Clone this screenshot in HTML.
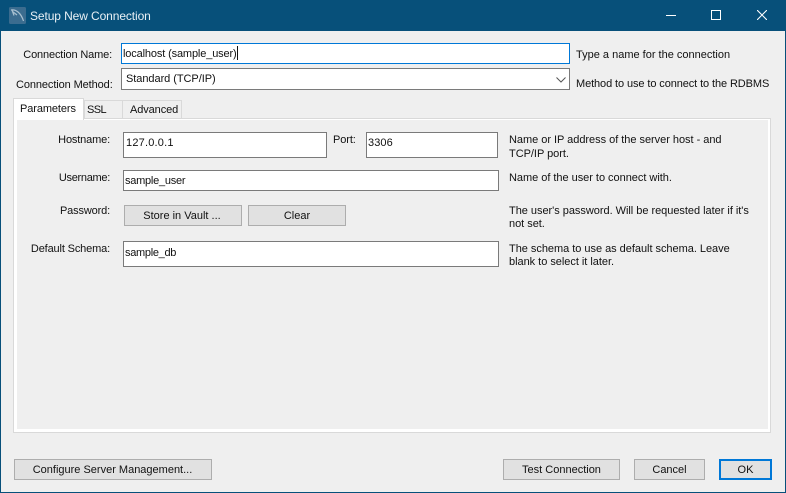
<!DOCTYPE html>
<html><head><meta charset="utf-8">
<style>
html,body{margin:0;padding:0;width:786px;height:493px;overflow:hidden;background:#efefef}
body{font-family:"Liberation Sans",sans-serif;font-size:11px;letter-spacing:-.1px;color:#111;position:relative}
div{position:absolute;box-sizing:border-box}
.t{white-space:nowrap;line-height:14px;height:14px}
.r{text-align:right;letter-spacing:-.15px}
.h{letter-spacing:-.03px}
.i{background:#fff;border:1px solid #7a7a7a}
.b{background:#e1e1e1;border:1px solid #adadad;text-align:center;white-space:nowrap;line-height:21px;letter-spacing:0}
</style></head><body>
<div style="left:0;top:0;width:786px;height:31px;background:#07507a"></div>
<div style="left:0;top:31px;width:1px;height:462px;background:#07507a"></div>
<div style="left:785px;top:31px;width:1px;height:462px;background:#07507a"></div>
<div style="left:0;top:492px;width:786px;height:1px;background:#07507a"></div>
<svg style="position:absolute;left:9px;top:7px" width="17" height="17" viewBox="0 0 17 17"><rect x="0" y="0" width="17" height="17" rx="1.5" fill="#3b6c8f"/><path d="M2 3C7 2 12 6 14.500 14M3 3L5 8.500M3.500 4.500L8 8" fill="none" stroke="#a9c0d0" stroke-width="1.200"/></svg>
<div class="t" style="left:30px;top:9px;font-size:12px;letter-spacing:-.1px;color:#e8f0f5">Setup New Connection</div>
<div style="left:666px;top:15px;width:10px;height:1px;background:#fff"></div>
<div style="left:711px;top:10px;width:10px;height:10px;border:1px solid #fff"></div>
<svg style="position:absolute;left:757px;top:10px" width="10" height="10" viewBox="0 0 10 10"><path d="M0 0L10 10M10 0L0 10" stroke="#fff" stroke-width="1.100"/></svg>

<div class="t r" style="left:10px;top:48px;width:102px">Connection Name:</div>
<div class="i" style="left:121px;top:43px;width:449px;height:21px;border-color:#0078d7"></div>
<div class="t" style="left:123px;top:47px;letter-spacing:-.14px">localhost (sample_user)</div>
<div style="left:237px;top:46px;width:1px;height:14px;background:#111"></div>
<div class="t" style="left:576px;top:48px;letter-spacing:0">Type a name for the connection</div>

<div class="t" style="left:16px;top:78px">Connection Method:</div>
<div class="i" style="left:121px;top:68px;width:449px;height:22px"></div>
<div class="t" style="left:126px;top:72px;letter-spacing:-.05px">Standard (TCP/IP)</div>
<svg style="position:absolute;left:556px;top:77px" width="10" height="6" viewBox="0 0 10 6"><path d="M.5 .5L5 5L9.500 .5" fill="none" stroke="#555" stroke-width="1"/></svg>
<div class="t" style="left:576px;top:77px">Method to use to connect to the RDBMS</div>

<div style="left:13px;top:118px;width:758px;height:315px;background:#fff;border:1px solid #d9d9d9"></div>
<div style="left:17px;top:120px;width:751px;height:309px;background:#efefef"></div>
<div style="left:84px;top:100px;width:39px;height:19px;background:#efefef;border:1px solid #d9d9d9"></div>
<div style="left:123px;top:100px;width:59px;height:19px;background:#efefef;border:1px solid #d9d9d9;border-left:0"></div>
<div style="left:13px;top:98px;width:71px;height:22px;background:#fff;border:1px solid #d9d9d9;border-bottom:0"></div>
<div class="t" style="left:20px;top:102px">Parameters</div>
<div class="t" style="left:87px;top:103px;letter-spacing:-.6px">SSL</div>
<div class="t" style="left:130px;top:103px">Advanced</div>

<div class="t r" style="left:10px;top:133px;width:100px">Hostname:</div>
<div class="i" style="left:123px;top:132px;width:204px;height:26px"></div>
<div class="t" style="left:126px;top:136px;letter-spacing:.2px">127.0.0.1</div>
<div class="t" style="left:333px;top:133px">Port:</div>
<div class="i" style="left:366px;top:132px;width:132px;height:26px"></div>
<div class="t" style="left:368px;top:136px;letter-spacing:.1px">3306</div>
<div class="t h" style="left:509px;top:133px">Name or IP address of the server host - and</div>
<div class="t h" style="left:509px;top:147px">TCP/IP port.</div>

<div class="t r" style="left:10px;top:171px;width:100px;letter-spacing:-.3px">Username:</div>
<div class="i" style="left:123px;top:170px;width:376px;height:21px"></div>
<div class="t" style="left:125px;top:174px;letter-spacing:-.25px">sample_user</div>
<div class="t h" style="left:509px;top:171px">Name of the user to connect with.</div>

<div class="t r" style="left:10px;top:204px;width:100px">Password:</div>
<div class="b" style="left:124px;top:205px;width:118px;height:21px;padding-right:2px">Store in Vault ...</div>
<div class="b" style="left:248px;top:205px;width:98px;height:21px">Clear</div>
<div class="t h" style="left:509px;top:204px">The user's password. Will be requested later if it's</div>
<div class="t h" style="left:509px;top:217px">not set.</div>

<div class="t r" style="left:10px;top:242px;width:100px">Default Schema:</div>
<div class="i" style="left:123px;top:241px;width:376px;height:26px"></div>
<div class="t" style="left:125px;top:246px;letter-spacing:-.3px">sample_db</div>
<div class="t h" style="left:509px;top:242px">The schema to use as default schema. Leave</div>
<div class="t h" style="left:509px;top:255px">blank to select it later.</div>

<div class="b" style="left:14px;top:459px;width:198px;height:21px;padding-right:1px">Configure Server Management...</div>
<div class="b" style="left:503px;top:459px;width:117px;height:21px">Test Connection</div>
<div class="b" style="left:634px;top:459px;width:71px;height:21px">Cancel</div>
<div class="b" style="left:719px;top:459px;width:53px;height:21px;border:2px solid #0078d7;line-height:19px">OK</div>
</body></html>
